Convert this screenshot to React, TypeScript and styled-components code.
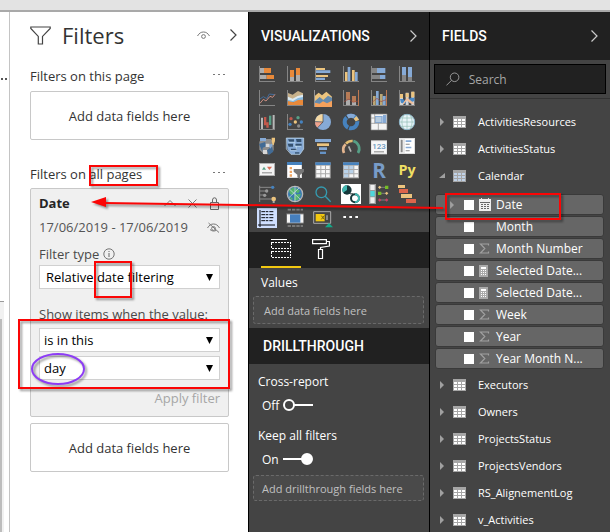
import React, { useState } from "react";
import styled, { createGlobalStyle } from "styled-components";

const GlobalStyle = createGlobalStyle`
  *, *::before, *::after { box-sizing: border-box; }
  body { margin: 0; overflow: hidden; }
  body, button, input, select { font-family: "Open Sans", "Noto Sans", sans-serif; }
  button { border: 0; padding: 0; background: none; color: inherit; cursor: pointer; }
  svg { display: block; }
`;

/* ---------- page frame ---------- */

const Page = styled.div`
  position: relative;
  display: flex;
  flex-direction: column;
  height: 100vh;
  overflow: hidden;
  background: #fff;
`;

const TopBar = styled.div`
  flex: none;
  height: 12px;
  background: #e3e3e3;
  border-bottom: 2px solid #a9a9a9;
`;

const Workspace = styled.div`
  flex: 1;
  min-height: 0;
  display: grid;
  grid-template-columns: 10px minmax(0, 238fr) minmax(0, 181fr) minmax(0, 181fr);
`;

const CanvasEdge = styled.div`
  display: flex;
  flex-direction: column;
  border-right: 1px solid #c4c4c4;
  overflow: hidden;
`;

const CanvasHeader = styled.div`
  flex: none;
  height: 289px;
  padding-top: 66px;
  svg { fill: #555; }
`;

const CanvasPage = styled.div`
  flex: 1;
  margin-right: 5px;
  padding-top: 17px;
  border-top: 1px solid #9a9a9a;
  background: #f1f1f1;
  &::after {
    content: "";
    display: block;
    width: 2px;
    height: 100%;
    background: #bdbdbd;
  }
`;

/* ---------- filters pane ---------- */

const FiltersPane = styled.section`
  min-width: 0;
  padding: 0 19px 0 20px;
  color: #333;
  font-size: 13px;
  overflow: hidden;
`;

const FiltersHeader = styled.header`
  display: flex;
  align-items: center;
  height: 46px;
  margin-right: -8px;
`;

const FiltersTitle = styled.h1`
  flex: 1;
  margin: 0 0 0 11px;
  font-size: 22px;
  font-weight: 400;
  line-height: 28px;
`;

const HeaderTools = styled.div`
  display: flex;
  align-items: center;
  gap: 19px;
`;

const SectionLabel = styled.div<{ $top: number }>`
  display: flex;
  align-items: center;
  justify-content: space-between;
  height: 20px;
  margin-top: ${(p) => p.$top}px;
  padding-right: 4px;
`;

const DropBox = styled.div<{ $top: number }>`
  display: flex;
  align-items: center;
  justify-content: center;
  height: 49px;
  margin-top: ${(p) => p.$top}px;
  border: 1px solid #c8c8c8;
  border-radius: 2px;
  white-space: nowrap;
`;

const FilterCard = styled.article`
  height: 229px;
  margin-top: 4px;
  padding: 5px 8px;
  border: 1px solid #c8c8c8;
  border-radius: 2px;
  background: #f0f0f0;
`;

const CardRow = styled.div<{ $height: number }>`
  display: flex;
  align-items: center;
  height: ${(p) => p.$height}px;
  white-space: nowrap;
`;

const CardTitle = styled.h2`
  flex: 1;
  margin: 0;
  font-size: 13px;
  font-weight: 700;
  color: #252525;
`;

const CardTools = styled.div`
  display: flex;
  align-items: center;
  gap: 12px;
`;

const DateRange = styled.span`
  flex: 1;
  color: #555;
`;

const FieldLabel = styled.label`
  margin-right: 4px;
  color: #4a4a4a;
`;

const SelectFrame = styled.div<{ $gap: number }>`
  display: grid;
  align-items: center;
  height: 24px;
  margin-bottom: ${(p) => p.$gap}px;
  border: 1px solid #d0d0d0;
  background: #fff;
  & > * { grid-area: 1 / 1; }
  & > svg { justify-self: end; margin-right: 6px; pointer-events: none; }
`;

const Select = styled.select<{ $indent: number }>`
  appearance: none;
  width: 100%;
  height: 22px;
  padding: 0 20px 0 ${(p) => p.$indent}px;
  border: 0;
  background: transparent;
  color: #000;
  font-size: 13px;
`;

const ApplyButton = styled.button`
  margin-left: auto;
  font-size: 13px;
  color: #a6a6a6;
`;

/* ---------- dark panes ---------- */

const DarkPane = styled.section`
  display: flex;
  flex-direction: column;
  min-width: 0;
  border-left: 1px solid #000;
  background: #444;
  color: #fff;
  font-size: 12px;
  overflow: hidden;
`;

const PaneHeader = styled.header<{ $height: number; $indent?: number }>`
  flex: none;
  display: flex;
  align-items: center;
  justify-content: space-between;
  height: ${(p) => p.$height}px;
  padding: 0 12px 0 ${(p) => p.$indent ?? 12}px;
  background: #212121;
`;

const PaneTitle = styled.h2`
  margin: 0;
  font-family: Roboto, "Open Sans", sans-serif;
  font-size: 14px;
  font-weight: 500;
  line-height: 20px;
`;

const VisualGrid = styled.div`
  flex: none;
  display: grid;
  grid-template-columns: repeat(6, 28px);
  grid-auto-rows: 24px;
  padding: 2px 0 2px 4px;
`;

const VisualButton = styled.button`
  display: grid;
  place-items: center;
  svg { overflow: visible; }
`;

const TabStrip = styled.div`
  flex: none;
  display: flex;
  height: 36px;
  padding-left: 12px;
  background: #212121;
`;

const Tab = styled.button<{ $active?: boolean }>`
  display: grid;
  place-items: center;
  width: 40px;
  border-bottom: 2px solid ${(p) => (p.$active ? "#f2c811" : "transparent")};
`;

const WellLabel = styled.div`
  flex: none;
  height: 28px;
  padding-left: 12px;
  font-size: 12px;
  line-height: 30px;
`;

const Well = styled.div<{ $height: number; $top: number; $bottom: number; $indent: number }>`
  flex: none;
  display: flex;
  align-items: center;
  height: ${(p) => p.$height}px;
  margin: ${(p) => p.$top}px 5px ${(p) => p.$bottom}px 4px;
  padding-left: ${(p) => p.$indent}px;
  border: 1px dashed #6a6a6a;
  border-radius: 3px;
  background: #4a4a4a;
  color: #c0c0c0;
  font-size: 11px;
  white-space: nowrap;
`;

const SwitchGroup = styled.label<{ $top: number }>`
  display: block;
  padding: ${(p) => p.$top}px 0 0 9px;
`;

const SwitchName = styled.span`
  display: flex;
  align-items: center;
  height: 20px;
`;

const SwitchRow = styled.span`
  display: flex;
  align-items: center;
  gap: 4px;
  height: 28px;
  padding-left: 4px;
`;

const HiddenCheck = styled.input`
  appearance: none;
  width: 0;
  height: 0;
  margin: 0 -4px 0 0;
`;

/* ---------- fields pane ---------- */

const SearchBar = styled.label`
  flex: none;
  display: flex;
  align-items: center;
  gap: 9px;
  height: 30px;
  margin: 4px;
  padding-left: 11px;
  border: 1px solid #000;
  background: #212121;
`;

const SearchInput = styled.input`
  width: 100%;
  min-width: 0;
  padding: 0;
  border: 0;
  outline: 0;
  background: transparent;
  color: #fff;
  font-size: 12px;
  &::placeholder { color: #a6a6a6; opacity: 1; }
`;

const FieldTree = styled.ul`
  margin: 0;
  padding: 9px 0 0;
  border-top: 1px solid #333;
  list-style: none;
`;

const TableRow = styled.button`
  display: grid;
  grid-template-columns: 14px 25px 1fr;
  align-items: center;
  width: 100%;
  height: 27px;
  padding-left: 9px;
  font-size: 11px;
  text-align: left;
  white-space: nowrap;
`;

const FieldList = styled.ul`
  display: grid;
  gap: 1px;
  margin: 0;
  padding: 5px 6px 2px 5px;
  list-style: none;
`;

const FieldRow = styled.label`
  display: grid;
  grid-template-columns: 15px 15px 17px 1fr;
  align-items: center;
  height: 21px;
  padding-left: 13px;
  border: 1px solid #3a3a3a;
  border-radius: 3px;
  background: #666;
  font-size: 12px;
  white-space: nowrap;
`;

const Check = styled.input`
  appearance: none;
  width: 10px;
  height: 10px;
  margin: 0;
  background: #fff;
  &:checked { background: #f2c811; }
`;

const Annotations = styled.svg`
  position: absolute;
  top: 0;
  left: 0;
  pointer-events: none;
  filter: drop-shadow(2px 2px 1px rgba(0, 0, 0, 0.4));
`;

/* ---------- small icons ---------- */

const Chevron = ({ color }: { color: string }) => (
  <svg width="8" height="12" viewBox="0 0 8 12" fill="none" stroke={color} strokeWidth="1.2">
    <path d="M1.5 .5 7 6 1.5 11.5" />
  </svg>
);

const Dots = () => (
  <svg width="13" height="4" viewBox="0 0 13 4" fill="#777">
    <path d="M1 0h2v1H1zM6 0h2v1H6zM11 0h2v1h-2z" />
  </svg>
);

const Funnel = () => (
  <svg width="21" height="19" viewBox="0 0 21 19" fill="none" stroke="#444" strokeWidth="1.2">
    <path d="M.8 1h19.4v1.4l-7.7 8V18H8.3v-7.6L.8 2.4z" />
  </svg>
);

const Eye = ({ off }: { off?: boolean }) => (
  <svg width="13" height="11" viewBox="0 0 13 11" fill="none" stroke="#777">
    <path d="M.5 6C2.2 3.2 4 2 6.5 2s4.3 1.2 6 4" />
    <circle cx="6.5" cy="6.5" r="1.9" />
    {off && <path d="M1.5 1 12 10.5M3 7.5c1.5 1.5 4 2 6 1" />}
  </svg>
);

const Caret = () => (
  <svg width="7" height="7" viewBox="0 0 7 7">
    <path d="M0 0h7L3.5 7z" />
  </svg>
);

const Info = () => (
  <svg width="12" height="12" viewBox="0 0 12 12" fill="none" stroke="#666">
    <circle cx="6" cy="6" r="5.2" strokeWidth=".9" />
    <path d="M6 5v4M6 3v1" />
  </svg>
);

const Triangle = ({ open }: { open?: boolean }) =>
  open ? (
    <svg width="7" height="7" viewBox="0 0 7 7" fill="#a0a0a0"><path d="M6 1v5H0z" /></svg>
  ) : (
    <svg width="7" height="8" viewBox="0 0 7 8" fill="#a0a0a0"><path d="M1 0l4 4-4 4z" /></svg>
  );

const TableGlyph = ({ cell }: { cell: string }) => (
  <svg width="13" height="12" viewBox="0 0 13 12" shapeRendering="crispEdges">
    <path fill="#a6a6a6" d="M0 0h13v12H0z" />
    <path fill={cell} d="M1 3h3v2H1zM5 3h3v2H5zM9 3h3v2H9zM1 6h3v2H1zM5 6h3v2H5zM9 6h3v2H9zM1 9h3v2H1zM5 9h3v2H5zM9 9h3v2H9z" />
  </svg>
);

const CalendarGlyph = () => (
  <svg width="12" height="13" viewBox="0 0 12 13" shapeRendering="crispEdges">
    <path fill="#eee" d="M0 1h2V0h1v1h6V0h1v1h2v12H0z" />
    <path fill="#666" d="M1 4h10v1H1zM2 6h2v1H2zM5 6h2v1H5zM8 6h2v1H8zM2 8h2v1H2zM5 8h2v1H5zM8 8h2v1H8zM2 10h2v1H2zM5 10h2v1H5zM8 10h2v1H8z" />
  </svg>
);

const SigmaGlyph = () => (
  <svg width="11" height="11" viewBox="0 0 11 11" fill="none" stroke="#a0a0a0" strokeWidth="1.2">
    <path d="M9.5 2.5V1h-8l4.300 4.500L1.500 10h8V8.500" />
  </svg>
);

const CalculatorGlyph = () => (
  <svg width="9" height="12" viewBox="0 0 9 12" shapeRendering="crispEdges">
    <path fill="#aaa" d="M0 0h9v12H0z" />
    <path fill="#fff" d="M2 2h5v2H2zM2 5h1v1H2zM4 5h1v1H4zM6 5h1v1H6zM2 7h1v1H2zM4 7h1v1H4zM6 7h1v1H6zM2 9h1v1H2zM4 9h1v1H4zM6 9h1v1H6z" />
  </svg>
);

const fieldGlyphs = {
  calendar: <CalendarGlyph />,
  none: <span />,
  sigma: <SigmaGlyph />,
  calculator: <CalculatorGlyph />,
};

/* ---------- visual gallery icons (54-unit grid drawn at 18px) ---------- */

const orange = "#e8893a";
const gray = "#adadad";
const gold = "#ecc47e";
const blue = "#86aad6";
const deep = "#4682be";

const Art = ({ children }: { children: React.ReactNode }) => (
  <svg width="18" height="18" viewBox="0 0 54 54">{children}</svg>
);
const F = ({ c, d }: { c: string; d: string }) => <path fill={c} d={d} />;
const L = ({ c, d, w = 3 }: { c: string; d: string; w?: number }) => (
  <path fill="none" stroke={c} strokeWidth={w} d={d} />
);
const Axis = () => <F c="#858585" d="M3 3h3v45h45v3H3z" />;

const visuals: [string, React.ReactNode][] = [
  ["Stacked bar chart", <><Axis /><F c={gray} d="M6 9h12v15H6zM6 30h20v12H6z" /><F c={orange} d="M18 9h21v15H18zM26 30h22v12H26z" /></>],
  ["Stacked column chart", <><Axis /><F c={orange} d="M12 15h12v21H12zM30 9h12v21H30z" /><F c={gray} d="M12 36h12v12H12zM30 30h12v18H30z" /></>],
  ["Clustered bar chart", <><Axis /><F c={gold} d="M6 9h27v6H6zM6 30h36v6H6z" /><F c={blue} d="M6 16h43v8H6zM6 38h27v7H6z" /></>],
  ["Clustered column chart", <><Axis /><F c={gold} d="M9 21h8v27H9zM30 15h8v33h-8z" /><F c={blue} d="M17 6h8v42h-8zM39 21h8v27h-8z" /></>],
  ["100% stacked bar chart", <><Axis /><F c="#858585" d="M6 9h15v15H6zM6 30h24v12H6z" /><F c={blue} d="M21 9h25v15H21zM30 30h16v12H30z" /></>],
  ["100% stacked column chart", <><Axis /><F c={blue} d="M12 6h12v24H12zM30 6h12v30H30z" /><F c="#858585" d="M12 30h12v18H12zM30 36h12v12H30z" /></>],

  ["Line chart", <><Axis /><L c="#426b9a" d="M6 30l10-7 10 6 8-14 16 2" /><L c="#cb8d80" d="M6 43l10-12 8 5 12-14 8 3 7-9" /></>],
  ["Area chart", <><Axis /><F c="#c7b18b" d="M6 12l14 5 16-11 15 7v26H6z" /><F c="#dceaf2" d="M6 23l14 6 15-8 16-4v20H6z" /><F c="#86b9df" d="M6 32l15 4 15-9 15-3v16H6z" /><F c={orange} d="M6 36l16 4 14-7 15-1v16H6z" /></>],
  ["Stacked area chart", <><F c="#949494" d="M0 3h3v51H0z" /><F c={gold} d="M3 20L14 11l10 8L37 8l17 15v23H3z" /><F c="#658bae" d="M3 36l14-12 11 9 14-13 12 6v20H3z" /><F c="#f5a15c" d="M3 41l14 3 10-7 12 6 15-8v19H3z" /></>],
  ["Line and stacked column chart", <><Axis /><F c="#b77b56" d="M12 9h12v23H12zM30 21h12v18H30z" /><F c={gray} d="M12 32h12v16H12zM30 39h12v9H30z" /><F c="#bd7851" d="M48 3h3v48h-3z" /><L c="#a54a3d" d="M6 38l15-8 12 10 15-4" w={2} /></>],
  ["Line and clustered column chart", <><Axis /><F c="#bca775" d="M9 21h8v27H9zM30 15h8v33h-8z" /><F c={blue} d="M18 6h8v42h-8zM38 21h9v27h-9z" /><F c="#bd7851" d="M48 3h3v48h-3z" /><L c="#a54a3d" d="M6 40l15-12 12 10 15-6" w={2} /></>],
  ["Ribbon chart", <><F c="#d3d3d3" d="M6 15h9v33H6zM23 11h9v37h-9zM40 8h9v40h-9z" /><F c={gold} d="M6 15h9v12H6zM23 13h9v12h-9zM40 8h9v17h-9z" /><F c="#4889c8" d="M6 30h9l8 8v8L9 41zM32 30l8-4h9v10l-17 6z" /><F c="#f2bd97" d="M15 42l12-16 13 10 9 10-13-3-9-9-12 14z" /><Axis /></>],

  ["Waterfall chart", <><Axis /><F c="#b7b7b7" d="M9 14h6v34H9zM44 6h6v42h-6z" /><F c="#c3594c" d="M18 12h7v25h-7zM25 28h7v16h-7z" /><F c="#579f86" d="M33 8h7v28h-7z" /></>],
  ["Scatter chart", <><Axis /><circle cx="15" cy="17" r="5" fill="#c3594c" /><circle cx="36" cy="14" r="5" fill="#579f86" /><circle cx="28" cy="27" r="5" fill={gold} /><circle cx="12" cy="34" r="5" fill={deep} /><circle cx="46" cy="27" r="5" fill={deep} /><circle cx="38" cy="39" r="5" fill="#8a8a8a" /></>],
  ["Pie chart", <><circle cx="27" cy="27" r="24" fill={blue} /><F c="#efa28c" d="M27 27L10 44A24 24 0 013 26z" /><F c="#f4d8a4" d="M27 27L3 25A24 24 0 0127 3z" /><L c="#444" d="M27 3v24L3 26m24 1L9 46" w={2} /></>],
  ["Donut chart", <><circle cx="27" cy="27" r="19" fill="none" stroke={deep} strokeWidth="12" strokeDasharray="35 3" /><L c={blue} d="M17 11q10-6 20 0" w={12} /><L c={gold} d="M39 13q5 5 7 10" w={11} /></>],
  ["Treemap", <><F c="#f4f4f4" d="M3 3h48v48H3z" /><F c={blue} d="M15 9h23v21H15zM39 6h10v24H39z" /><F c="#b7ccdf" d="M17 12h17v15H17z" /><L c="#888" d="M3 3h48v48H3zM3 31h48M25 31v20M14 3v28M3 15h11" w={2} /></>],
  ["Map", <><circle cx="27" cy="27" r="23" fill="#e8f4f8" stroke="#8fb6cc" strokeWidth="3" /><L c="#8fbdb2" d="M27 4v46M5 27h44M10 15h34M10 40h34M18 5q-13 22 0 44M36 5q13 22 0 44" w={2} /></>],

  ["Filled map", <><F c="#8e8e8e" d="M4 14l8-8h27l8 14v20L34 52H18L4 38z" /><F c="#426b95" d="M3 21l18-6 5 13-12 4-1 12zM27 40l15-12 4 16-14 10z" /><F c={blue} d="M6 3h18v9H6zM30 23l15-3-7 15z" /><F c="#d7d7d7" d="M23 20h11v10H23zM15 39h12v12H15z" /><F c={gold} d="M41 2h10v10l-4 12h-3l-3-12z" /></>],
  ["Shape map", <><F c={blue} d="M1 3h52v33L42 52H15L4 36z" /><F c="#34516f" d="M6 7h18v7H10zM30 6h16v9H32zM5 20h16v9H8zM27 20h20v6H27zM15 35h18v5H15zM27 46h13v4H27z" /><L c="#c5dff1" d="M1 3h52v33L42 52H15L1 36zM7 16h20v12h18M13 41h18V27" w={2} /></>],
  ["Funnel", <><F c={blue} d="M3 6h48v9H3zM15 31h24v8H15z" /><F c={gold} d="M9 19h36v8H9z" /><F c="#6592c5" d="M18 44h18v7H18z" /></>],
  ["Gauge", <><L c="#e3b58f" d="M6 48A23 23 0 0111 22" w={8} /><L c="#e0bd73" d="M12 20A24 24 0 0132 12" w={8} /><L c="#579f86" d="M34 12A24 24 0 0148 48" w={8} /><L c="#b5b5b5" d="M27 44L20 28" w={5} /></>],
  ["Card", <><F c="#e5e5e5" d="M3 10h48v42H3z" /><F c="#f7f7f7" d="M6 13h42v36H6z" /><text x="27" y="36" textAnchor="middle" fontFamily="Roboto" fontSize="24" fontWeight="500" fill="#6a96bd">123</text><F c="#888" d="M12 43h30v3H12z" /></>],
  ["Multi-row card", <><F c="#ddd" d="M3 3h48v48H3z" /><F c="#fff" d="M7 6h9v42H7zM20 6h28v42H20z" /><F c="#888" d="M8 8h6v38H8z" /><F c={blue} d="M23 10h17v5H23zM23 29h17v5H23z" /><F c="#8a8a8a" d="M23 20h12v3H23zM23 40h12v3H23z" /></>],

  ["KPI", <><F c="#b1b1b1" d="M3 6h48v39H3z" /><F c="#f4f4f4" d="M6 9h42v33H6z" /><F c="#579f86" d="M12 26l6-9 6 9z" /><F c="#d76b56" d="M27 17h15l-8 10z" /><F c="#888" d="M12 34h30v3H12z" /></>],
  ["Slicer", <><F c="#ddd" d="M3 3h45v48H3z" /><F c="#fff" d="M6 12h39v36H6z" /><F c={deep} d="M3 3h45v9H3z" /><F c="#f0a765" d="M11 18h7v7h-7zM11 29h7v7h-7zM11 40h7v7h-7z" /><F c="#777" d="M23 24h31v8L42 42v12l-8-5v-8L23 32z" /></>],
  ["Table", <><F c="#aaa" d="M4 4h46v48H4z" /><F c={deep} d="M4 4h46v8H4z" /><F c="#f7f7f7" d="M7 14h12v10H7zM22 14h11v10H22zM36 14h11v10H36zM7 27h12v10H7zM22 27h11v10H22zM36 27h11v10H36zM7 40h12v9H7zM22 40h11v9H22zM36 40h11v9H36z" /></>],
  ["Matrix", <><F c="#aaa" d="M3 4h48v48H3z" /><F c={deep} d="M3 4h48v8H3z" /><F c="#b9d2e9" d="M6 14h13v10H6zM6 27h13v10H6zM6 40h13v9H6zM22 14h12v10H22zM22 27h12v10H22z" /><F c="#f7f7f7" d="M37 14h11v10H37zM37 27h11v10H37zM22 40h12v9H22zM37 40h11v9H37z" /></>],
  ["R script visual", <text x="27" y="50" textAnchor="middle" fontFamily="Open Sans" fontSize="62" fontWeight="700" fill="#789cc8">R</text>],
  ["Python visual", <text x="27" y="42" textAnchor="middle" fontFamily="Open Sans" fontSize="43" fontWeight="700" fill="#efdf63">Py</text>],

  ["Key influencers", <><L c="#8a8a8a" d="M5 2v49M5 7h36M5 18h20M5 30h15M5 42h36" w={3} /><circle cx="44" cy="7" r="5" fill={deep} /><circle cx="26" cy="18" r="5" fill="#999" /><circle cx="20" cy="31" r="5" fill="#999" /><circle cx="47" cy="42" r="7" fill={gold} /><F c="#ddd" d="M44 49h6v4h-6z" /></>],
  ["ArcGIS map", <><circle cx="27" cy="27" r="23" fill="#397bb1" stroke="#b5b5b5" strokeWidth="4" /><F c="#54b36d" d="M9 16l14-9 5 11-7 12-9-3zM29 8l13 9-6 8-8-5zM26 29l19-3-8 18-13 3zM9 32l12 9-4 5z" /><L c="#d9e8e9" d="M10 12l33 31M9 38L39 9M27 4v46" w={2} /></>],
  ["Q&A", <><circle cx="22" cy="22" r="16" fill="none" stroke="#359bb0" strokeWidth="4" /><L c="#359bb0" d="M33 33l17 17" w={4} /></>],
  ["Bubble comparison", <><F c="#fff" d="M-3-3h60v60H-3z" /><circle cx="15" cy="15" r="14" fill="#16383b" /><F c="#41b7b0" d="M15 15V1A14 14 0 003 23z" /><circle cx="39" cy="40" r="12" fill="none" stroke="#16383b" strokeWidth="6" /><L c="#41b7b0" d="M39 28a12 12 0 010 24" w={6} /><F c="#223333" d="M24 25h9v3h-9z" /></>],
  ["Timeline", <><F c="#999" d="M-3-3h21v60H-3z" /><F c="#eee" d="M1 0h13v15H1zM1 37h13v17H1z" /><F c="#4ed5dc" d="M1 18h13v16H1z" /><L c="#999" d="M28 7h23M28 25h23M28 45h23" w={2} /><F c={gold} d="M24 7l5-5 5 5-5 5zM45 25l5-5 5 5-5 5z" /><F c="#75bd27" d="M45 2h10v10H45zM24 20h10v10H24z" /><F c="#c83e65" d="M24 45l5-5 5 5-5 5zM45 45l5-5 5 5-5 5z" /></>],
  ["Gantt", <><F c={gold} d="M0 0h21v9H0zM9 27h33v12H9z" /><F c="#dc654b" d="M3 12h27v12H3zM24 42h30v12H24z" /></>],

  ["Text document", <><F c="#cfdfff" d="M-3-3h60v60H-3z" /><L c="#090b10" d="M6 3v51M0 48h51" w={3} /><path fill="none" stroke="#090b10" strokeWidth="3" strokeDasharray="12 2 7 3" d="M10 8h38M10 17h38M10 26h38M10 35h34" /></>],
  ["Chart frame", <><path fill="none" stroke="#888" strokeWidth="5" strokeDasharray="10 3" d="M5 2h46M5 51h46" /><F c="#777" d="M1 13h52v31H1z" /><F c="#f4f4f4" d="M3 16h49v25H3z" /><F c="#467fbd" d="M12 16h31v25H12z" /></>],
  ["Excel card", <><path fill="#444" stroke="#aaa" strokeWidth="3" d="M-1 8h51v35H-1z" /><F c="#f2c811" d="M5 15h27v22H5z" /><L c="#75620d" d="M22 20l9 11M31 20l-9 11" w={3} /><L c="#aaa" d="M39 19v14" w={4} /><F c="#13a889" d="M45 42l12 13H33z" /></>],
  ["More visuals", <F c="#fff" d="M4 21h8v6H4zM22 21h8v6h-8zM40 21h8v6h-8z" />],
];

/* ---------- data ---------- */

type FieldKind = keyof typeof fieldGlyphs;

const calendarFields: { name: string; kind: FieldKind }[] = [
  { name: "Date", kind: "calendar" },
  { name: "Month", kind: "none" },
  { name: "Month Number", kind: "sigma" },
  { name: "Selected Date...", kind: "calculator" },
  { name: "Selected Date...", kind: "calculator" },
  { name: "Week", kind: "sigma" },
  { name: "Year", kind: "sigma" },
  { name: "Year Month N...", kind: "sigma" },
];

const tables = [
  "ActivitiesResources",
  "ActivitiesStatus",
  "Calendar",
  "Executors",
  "Owners",
  "ProjectsStatus",
  "ProjectsVendors",
  "RS_AlignementLog",
  "v_Activities",
];

/* ---------- composed parts ---------- */

function Dropdown(props: { id: string; label?: string; value: string; indent: number; gap: number }) {
  return (
    <SelectFrame $gap={props.gap}>
      <Select id={props.id} aria-label={props.label} $indent={props.indent}>
        <option>{props.value}</option>
      </Select>
      <Caret />
    </SelectFrame>
  );
}

function Switch({ name, initial, top }: { name: string; initial: boolean; top: number }) {
  const [on, setOn] = useState(initial);
  return (
    <SwitchGroup $top={top}>
      <SwitchName>{name}</SwitchName>
      <SwitchRow>
        {on ? "On" : "Off"}
        <HiddenCheck type="checkbox" role="switch" checked={on} onChange={() => setOn(!on)} />
        <svg width="31" height="12" viewBox="0 0 31 12" fill="none" stroke="#fff" strokeWidth="2">
          {on ? (
            <><path d="M0 6h20" /><circle cx="24" cy="6" r="5" fill="#fff" /></>
          ) : (
            <><circle cx="6" cy="6" r="5" /><path d="M11 6h19" /></>
          )}
        </svg>
      </SwitchRow>
    </SwitchGroup>
  );
}

function Filters() {
  return (
    <FiltersPane>
      <FiltersHeader>
        <Funnel />
        <FiltersTitle>Filters</FiltersTitle>
        <HeaderTools>
          <button aria-label="Show filter pane"><Eye /></button>
          <button aria-label="Collapse filters"><Chevron color="#444" /></button>
        </HeaderTools>
      </FiltersHeader>

      <SectionLabel $top={8}>Filters on this page<Dots /></SectionLabel>
      <DropBox $top={5}>Add data fields here</DropBox>

      <SectionLabel $top={24}>Filters on all pages<Dots /></SectionLabel>
      <FilterCard>
        <CardRow $height={18}>
          <CardTitle>Date</CardTitle>
          <CardTools>
            <button aria-label="Collapse card">
              <svg width="12" height="8" viewBox="0 0 12 8" fill="none" stroke="#777"><path d="M.5 7 6 1.500 11.500 7" /></svg>
            </button>
            <button aria-label="Remove filter">
              <svg width="9" height="9" viewBox="0 0 9 9" fill="none" stroke="#777"><path d="M.5.5l8 8M8.500.5l-8 8" /></svg>
            </button>
            <button aria-label="Lock filter">
              <svg width="11" height="13" viewBox="0 0 11 13" fill="none" stroke="#666"><path d="M1.500 5.500h8v7h-8zM3.500 5V3a2 2.200 0 014 0v2" /></svg>
            </button>
          </CardTools>
        </CardRow>
        <CardRow $height={30}>
          <DateRange>17/06/2019 - 17/06/2019</DateRange>
          <button aria-label="Hide filter"><Eye off /></button>
        </CardRow>
        <CardRow $height={23}>
          <FieldLabel htmlFor="filter-type">Filter type</FieldLabel>
          <Info />
        </CardRow>
        <Dropdown id="filter-type" value="Relative date filtering" indent={6} gap={10} />
        <CardRow $height={29}>
          <FieldLabel htmlFor="condition">Show items when the value:</FieldLabel>
        </CardRow>
        <Dropdown id="condition" value="is in this" indent={4} gap={4} />
        <Dropdown id="period" label="Period" value="day" indent={4} gap={6} />
        <CardRow $height={24}>
          <ApplyButton>Apply filter</ApplyButton>
        </CardRow>
      </FilterCard>

      <DropBox $top={6}>Add data fields here</DropBox>
    </FiltersPane>
  );
}

function Visualizations() {
  return (
    <DarkPane>
      <PaneHeader $height={48}>
        <PaneTitle>VISUALIZATIONS</PaneTitle>
        <button aria-label="Collapse visualizations"><Chevron color="#ccc" /></button>
      </PaneHeader>
      <VisualGrid>
        {visuals.map(([name, art]) => (
          <VisualButton key={name} aria-label={name}><Art>{art}</Art></VisualButton>
        ))}
      </VisualGrid>
      <TabStrip>
        <Tab $active aria-label="Fields">
          <svg width="20" height="20" viewBox="0 0 20 20" fill="#fff" shapeRendering="crispEdges">
            <path d="M0 0h16v1H0z" />
            <path fill="none" stroke="#fff" strokeDasharray="2 1" d="M.5 3.500h19v6H.5zM.5 12.500h19v6H.5z" />
          </svg>
        </Tab>
        <Tab aria-label="Format">
          <svg width="18" height="20" viewBox="0 0 18 20" fill="none" stroke="#fff" strokeWidth="1.200">
            <path d="M.6.6h13.800v4H.6zM14.400 2.500h3v4.500l-8.900 1.500v2M6.500 10.500h4v9h-4z" />
          </svg>
        </Tab>
      </TabStrip>
      <WellLabel>Values</WellLabel>
      <Well $height={28} $top={0} $bottom={4} $indent={10}>Add data fields here</Well>
      <PaneHeader $height={36} $indent={14}>
        <PaneTitle>DRILLTHROUGH</PaneTitle>
      </PaneHeader>
      <Switch name="Cross-report" initial={false} top={7} />
      <Switch name="Keep all filters" initial top={6} />
      <Well $height={26} $top={2} $bottom={4} $indent={8}>Add drillthrough fields here</Well>
    </DarkPane>
  );
}

function Fields() {
  return (
    <DarkPane>
      <PaneHeader $height={48}>
        <PaneTitle>FIELDS</PaneTitle>
        <button aria-label="Collapse fields"><Chevron color="#ccc" /></button>
      </PaneHeader>
      <SearchBar>
        <svg width="16" height="16" viewBox="0 0 16 16" fill="none" stroke="#aaa">
          <circle cx="10" cy="6" r="5" />
          <path d="M6.500 9.500.5 15.500" />
        </svg>
        <SearchInput type="text" placeholder="Search" aria-label="Search" />
      </SearchBar>
      <FieldTree>
        {tables.map((table) => {
          const open = table === "Calendar";
          return (
            <li key={table}>
              <TableRow aria-expanded={open}>
                <Triangle open={open} />
                <TableGlyph cell={open ? "#c0d2e8" : "#fff"} />
                {table}
              </TableRow>
              {open && (
                <FieldList>
                  {calendarFields.map((field, i) => (
                    <li key={i}>
                      <FieldRow>
                        {field.kind === "calendar" ? <Triangle /> : <span />}
                        <Check type="checkbox" />
                        {fieldGlyphs[field.kind]}
                        {field.name}
                      </FieldRow>
                    </li>
                  ))}
                </FieldList>
              )}
            </li>
          );
        })}
      </FieldTree>
    </DarkPane>
  );
}

export default function App() {
  return (
    <>
      <GlobalStyle />
      <Page>
        <TopBar />
        <Workspace>
          <CanvasEdge>
            <CanvasHeader>
              <svg width="8" height="2" viewBox="0 0 8 2"><path d="M1 0h2v2H1zM5 0h2v2H5z" /></svg>
            </CanvasHeader>
            <CanvasPage />
          </CanvasEdge>
          <Filters />
          <Visualizations />
          <Fields />
        </Workspace>
        <Annotations width="610" height="532" viewBox="0 0 610 532" fill="none" stroke="#fb0505" strokeWidth="2">
          <path d="M90 166h67v19H90zM95 262h36v35H95zM19 320h210v68H19zM446 194h114v25H446z" />
          <path d="M104 203l339 5" />
          <path d="M91 202l15-5v10z" fill="#fb0505" stroke="none" />
          <ellipse cx="58" cy="369" rx="26" ry="15" stroke="#8d3cf5" />
        </Annotations>
      </Page>
    </>
  );
}
